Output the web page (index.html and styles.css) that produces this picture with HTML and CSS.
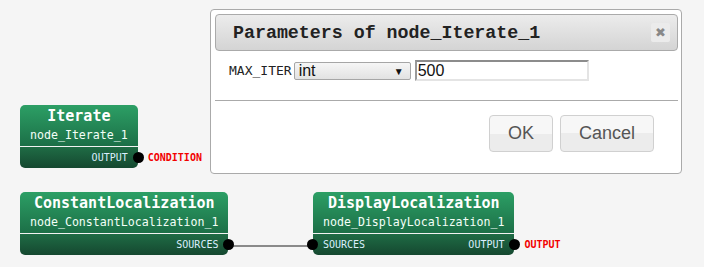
FILE: index.html
```html
<!DOCTYPE html>
<html lang="en">
<head>
    <meta charset="UTF-8">
    <meta name="viewport" content="width=device-width, initial-scale=1.0">
    <title>Graph editor</title>
    <link rel="stylesheet" href="styles.css">
</head>
<body>
    <div class="canvas">
        <!-- connection between ConstantLocalization and DisplayLocalization -->
        <svg class="wires" width="704" height="267">
            <line x1="229" y1="246" x2="313" y2="246" stroke="#666" stroke-width="1.5"></line>
        </svg>

        <div class="node node-iterate">
            <div class="node-head">
                <div class="node-title">Iterate</div>
                <div class="node-id">node_Iterate_1</div>
            </div>
            <div class="node-foot">
                <span class="port port-right">OUTPUT<i class="dot"></i><b class="tag">CONDITION</b></span>
            </div>
        </div>

        <div class="node node-constant">
            <div class="node-head">
                <div class="node-title">ConstantLocalization</div>
                <div class="node-id">node_ConstantLocalization_1</div>
            </div>
            <div class="node-foot">
                <span class="port port-right">SOURCES<i class="dot"></i></span>
            </div>
        </div>

        <div class="node node-display">
            <div class="node-head">
                <div class="node-title">DisplayLocalization</div>
                <div class="node-id">node_DisplayLocalization_1</div>
            </div>
            <div class="node-foot">
                <span class="port port-left"><i class="dot"></i>SOURCES</span>
                <span class="port port-right">OUTPUT<i class="dot"></i><b class="tag">OUTPUT</b></span>
            </div>
        </div>

        <!-- parameters dialog -->
        <div class="dialog">
            <div class="dialog-titlebar">
                <span class="dialog-title">Parameters of node_Iterate_1</span>
                <span class="dialog-close">&#10006;</span>
            </div>
            <div class="dialog-content">
                <label class="param-name">MAX_ITER</label>
                <div class="param-type">int<span class="arrow">&#9660;</span></div>
                <input class="param-value" type="text" value="500">
            </div>
            <div class="dialog-buttons">
                <button class="btn btn-ok">OK</button>
                <button class="btn">Cancel</button>
            </div>
        </div>
    </div>
</body>
</html>
```

FILE: styles.css
```css
body {
    margin: 0;
    background: #f5f5f5;
    font-family: 'Liberation Sans', Arial, sans-serif;
}

.canvas {
    position: relative;
    width: 704px;
    height: 267px;
    overflow: hidden;
}

.wires {
    position: absolute;
    left: 0;
    top: 0;
}

/* nodes */
.node {
    position: absolute;
    border-radius: 5px;
    color: #fff;
    font-family: 'DejaVu Sans Mono', monospace;
}

.node-iterate { left: 20px; top: 105px; }
.node-constant { left: 20px; top: 192px; }
.node-display { left: 313px; top: 192px; }

.node-head {
    height: 42px;
    box-sizing: border-box;
    padding: 2px 10px 0;
    text-align: center;
    background: linear-gradient(#2c9f65, #1c6f47);
    border-radius: 5px 5px 0 0;
    border-bottom: 1px solid #f2f2f2;
}

.node-title {
    font-size: 15px;
    font-weight: bold;
    line-height: 19px;
}

.node-id {
    font-size: 11.6px;
    line-height: 19px;
    color: #f4fff8;
}

.node-foot {
    position: relative;
    height: 21px;
    padding: 0 10px;
    display: flex;
    align-items: center;
    justify-content: flex-end;
    background: linear-gradient(#1f6c45, #154830);
    border-radius: 0 0 5px 5px;
    font-size: 10px;
    color: #dcefff;
}

.node-display .node-foot {
    justify-content: space-between;
}

.dot {
    position: absolute;
    top: 5px;
    width: 11px;
    height: 11px;
    border-radius: 50%;
    background: #000;
}

.port-right .dot { right: -6px; }
.port-left .dot { left: -6px; }

.tag {
    position: absolute;
    top: 5px;
    left: calc(100% + 10px);
    color: #f20000;
    font-weight: bold;
    white-space: nowrap;
    line-height: 11px;
}

/* dialog */
.dialog {
    position: absolute;
    left: 210px;
    top: 9px;
    width: 472px;
    height: 165px;
    box-sizing: border-box;
    padding: 4px 3px 0 4px;
    background: #fff;
    border: 1px solid #aaa;
    border-radius: 4px;
}

.dialog-titlebar {
    height: 37px;
    box-sizing: border-box;
    display: flex;
    align-items: center;
    justify-content: space-between;
    padding: 0 7px 0 17px;
    background: linear-gradient(#ececec, #d4d4d4);
    border: 1px solid #aaa;
    border-radius: 4px;
}

.dialog-title {
    font-family: 'Liberation Mono', monospace;
    font-size: 18.3px;
    font-weight: bold;
    color: #222;
}

.dialog-close {
    width: 19px;
    height: 19px;
    display: flex;
    align-items: center;
    justify-content: center;
    background: #ebebeb;
    border-radius: 2px;
    font-size: 13px;
    color: #888;
}

.dialog-content {
    height: 49px;
    box-sizing: border-box;
    padding: 9px 0 0 14px;
    display: flex;
    align-items: flex-start;
}

.param-name {
    margin-top: 3px;
    font-family: 'DejaVu Sans Mono', monospace;
    font-size: 13px;
    color: #222;
    line-height: 15px;
}

.param-type {
    margin: 2px 0 0 2px;
    width: 117px;
    height: 18px;
    box-sizing: border-box;
    padding: 0 0 0 4px;
    display: flex;
    align-items: center;
    justify-content: space-between;
    border: 1px solid #a6a6a6;
    border-radius: 2px;
    background: linear-gradient(#f6f6f6, #e2e2e2);
    font-size: 16px;
    color: #111;
}

.arrow {
    font-size: 10px;
    margin-right: 6px;
}

.param-value {
    margin: 0 0 0 4px;
    width: 174px;
    height: 21px;
    box-sizing: border-box;
    padding: 0 1px;
    border: 2px solid #e4e4e4;
    border-top-color: #8c8c8c;
    border-left-color: #9a9a9a;
    font-family: 'Liberation Sans', Arial, sans-serif;
    font-size: 16px;
    color: #111;
    outline: none;
}

.dialog-buttons {
    border-top: 1px solid #aaa;
    padding: 14px 24px 0 0;
    display: flex;
    justify-content: flex-end;
    gap: 7px;
}

.btn {
    height: 37px;
    padding: 0 18px;
    border: 1px solid #d0d0d0;
    border-radius: 4px;
    background: linear-gradient(#f7f7f7 50%, #ececec 50%);
    font-family: 'Liberation Sans', Arial, sans-serif;
    font-size: 18px;
    color: #555;
}

.btn-ok {
    width: 64px;
    padding: 0;
}
```
